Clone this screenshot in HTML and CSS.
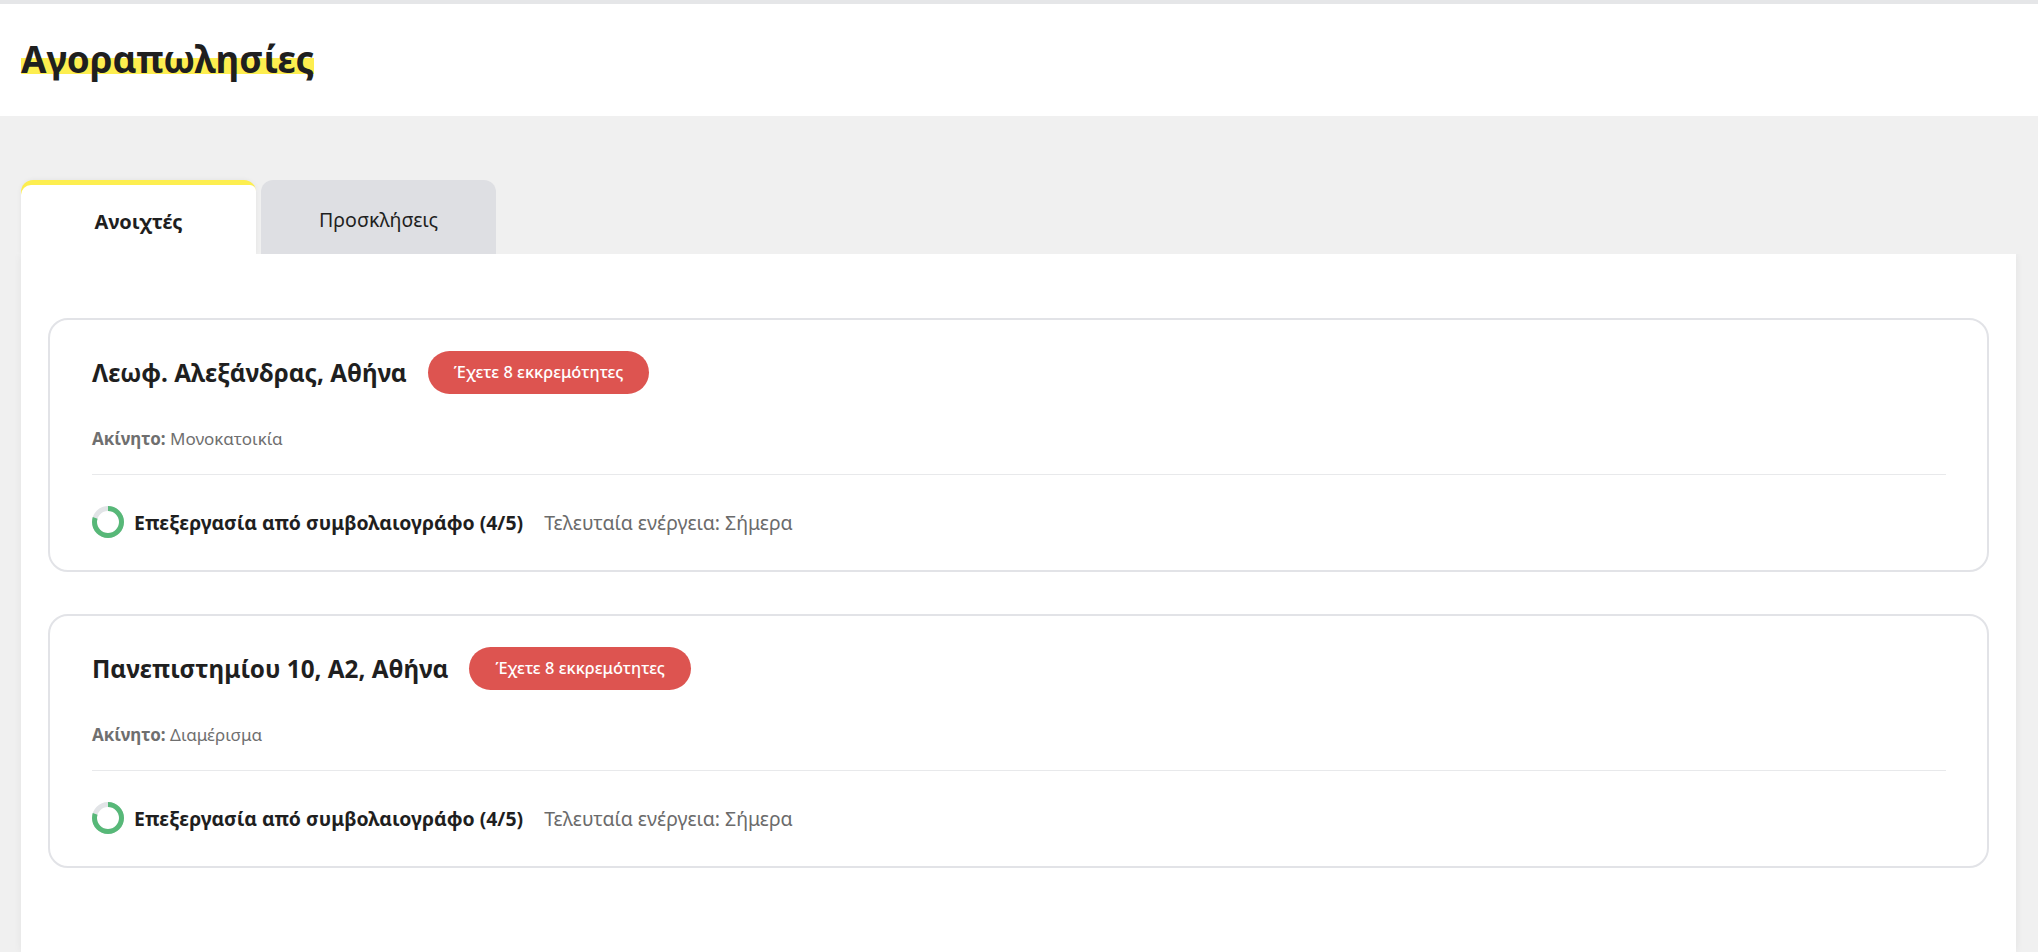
FILE: index.html
```html
<!DOCTYPE html>
<html lang="el">
<head>
<meta charset="utf-8">
<title>Αγοραπωλησίες</title>
<link rel="stylesheet" href="styles.css">
</head>
<body>
<header class="header">
  <h1 class="title"><span class="title-mark">Αγοραπωλησίες</span></h1>
</header>
<main class="main">
  <nav class="tabs">
    <div class="tab tab-active"><div class="tab-inner">Ανοιχτές</div></div>
    <div class="tab">Προσκλήσεις</div>
  </nav>
  <section class="panel">
    <article class="card">
      <div class="card-head">
        <h2 class="card-title">Λεωφ. Αλεξάνδρας, Αθήνα</h2>
        <span class="badge">Έχετε 8 εκκρεμότητες</span>
      </div>
      <p class="prop"><b>Ακίνητο:</b> Μονοκατοικία</p>
      <div class="card-foot">
        <svg class="ring" viewBox="0 0 32 32"><circle class="ring-bg" cx="16" cy="16" r="13.5"/><circle class="ring-fg" cx="16" cy="16" r="13.5" pathLength="100" stroke-dasharray="80 100" transform="rotate(-90 16 16)"/></svg>
        <strong class="status">Επεξεργασία από συμβολαιογράφο (4/5)</strong>
        <span class="last">Τελευταία ενέργεια: Σήμερα</span>
      </div>
    </article>
    <article class="card">
      <div class="card-head">
        <h2 class="card-title">Πανεπιστημίου 10, Α2, Αθήνα</h2>
        <span class="badge">Έχετε 8 εκκρεμότητες</span>
      </div>
      <p class="prop"><b>Ακίνητο:</b> Διαμέρισμα</p>
      <div class="card-foot">
        <svg class="ring" viewBox="0 0 32 32"><circle class="ring-bg" cx="16" cy="16" r="13.5"/><circle class="ring-fg" cx="16" cy="16" r="13.5" pathLength="100" stroke-dasharray="80 100" transform="rotate(-90 16 16)"/></svg>
        <strong class="status">Επεξεργασία από συμβολαιογράφο (4/5)</strong>
        <span class="last">Τελευταία ενέργεια: Σήμερα</span>
      </div>
    </article>
  </section>
</main>
</body>
</html>
```
FILE: styles.css
```css
* { box-sizing: border-box; }
html, body { height: 100%; }
body {
  margin: 0;
  overflow: hidden;
  background: #f0f0f0;
  color: #1f1f1f;
  font-family: "Noto Sans", "Open Sans", sans-serif;
  border-top: 4px solid #e5e6e8;
  display: flex;
  flex-direction: column;
}
.header {
  height: 112px;
  flex: none;
  background: #fff;
  padding: 0 21px 2px;
  display: flex;
  align-items: center;
}
.title { margin: 0; font-size: 36.8px; line-height: 48px; font-weight: 700; }
.title-mark { background: linear-gradient(to bottom, transparent 0, transparent 23px, #fdee4f 23px, #fdee4f 39px, transparent 39px); display: inline-block; height: 48px; }
.main { flex: 1; padding: 64px 22px 0 21px; display: flex; flex-direction: column; min-height: 0; }
.tabs { display: flex; gap: 5px; flex: none; }
.tab {
  width: 235px;
  height: 74px;
  padding-top: 20px;
  background: #dedfe3;
  border-radius: 12px 12px 0 0;
  text-align: center;
  font-size: 19.6px;
  line-height: 40px;
}
.tab-active {
  background: #fdee4f;
  padding-top: 5px;
  font-size: 20px;
  font-weight: 700;
  box-shadow: 0 0 5px rgba(0,0,0,.06);
  clip-path: inset(-6px -6px 0 -6px);
}
.tab-inner {
  height: 69px;
  padding-top: 17px;
  background: #fff;
  border-radius: 10px 6px 0 0;
}
.panel {
  flex: 1;
  background: #fff;
  padding: 64px 27px 0;
  display: flex;
  flex-direction: column;
  gap: 42px;
  box-shadow: 0 0 8px rgba(0,0,0,.06);
  clip-path: inset(0 -12px -12px -12px);
}
.card {
  height: 254px;
  border: 2px solid #e2e3e7;
  border-radius: 20px;
  padding: 31px 41px 0 42px;
}
.card-head { display: flex; align-items: center; gap: 21px; height: 43px; }
.card-title { margin: 0; font-size: 24.3px; line-height: 32px; font-weight: 700; }
.badge {
  height: 43px;
  padding: 0 26px;
  border-radius: 22px;
  background: #dd5450;
  color: #fff;
  font-size: 16.4px;
  font-weight: 500;
  line-height: 41px;
}
.prop {
  margin: 33px 0 0;
  color: #6f6f6f;
  font-size: 17px;
  line-height: 24px;
  padding-bottom: 23px;
  border-bottom: 1px solid #e8e9eb;
}
.prop b { font-weight: 700; }
.card-foot { display: flex; align-items: center; height: 32px; margin-top: 31px; font-size: 19.45px; }
.ring { width: 32px; height: 32px; flex: none; margin-right: 10px; }
.ring circle { fill: none; stroke-width: 5; }
.ring-bg { stroke: #e2e4e7; }
.ring-fg { stroke: #57b878; }
.status { font-weight: 700; }
.last { margin-left: 21px; color: #6b6b6b; }
```
